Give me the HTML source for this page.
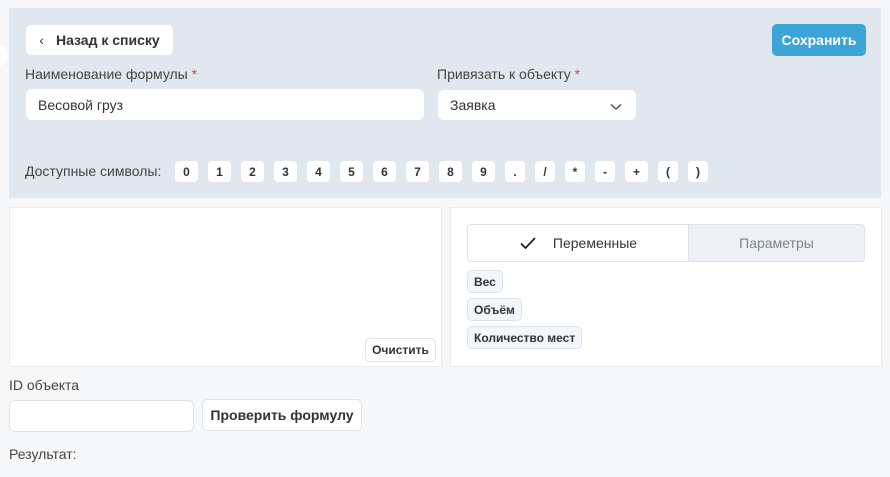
<!DOCTYPE html>
<html><head><meta charset="utf-8"><style>
*{box-sizing:border-box;margin:0;padding:0}
body{width:890px;height:477px;background:#f6f7f9;font-family:"Liberation Sans",sans-serif;color:#333;position:relative;overflow:hidden;font-size:14px}
.abs{position:absolute}
.top{left:9px;top:8px;width:872px;height:190px;background:#e1e7ef}
.btn{background:#fff;border-radius:5px;display:flex;align-items:center;justify-content:center;font-weight:bold;color:#333}
.lbl{font-size:14px;color:#444}
.star{color:#e04848}
.inp{background:#fff;border-radius:6px;display:flex;align-items:center;padding-left:12px;font-size:14px;color:#333}
.sym{display:flex;gap:10px;left:175px;top:161px}
.sym div{background:#fff;border-radius:4px;height:21px;width:23px;font-size:12px;font-weight:bold;display:flex;align-items:center;justify-content:center}
.sym div.n{width:20px}
.box{background:#fff;border:1px solid #e8ecf1}
.tag{background:#f3f6fa;border:1px solid #dde3ea;border-radius:5px;font-size:12px;font-weight:bold;height:23px;display:flex;align-items:center;padding:0 6px;left:467px}
</style></head><body>
<div class="abs" style="left:-12px;top:44px;width:20px;height:22px;background:#fff;border-radius:50%"></div>
<div class="abs top"></div>
<div class="abs btn" style="left:26px;top:25px;width:147px;height:30px;font-size:14px"><span style="margin-right:12px;font-weight:normal">‹</span>Назад к списку</div>
<div class="abs btn" style="left:772px;top:24px;width:94px;height:32px;background:#3ba5d9;color:#fff;font-size:14px">Сохранить</div>
<div class="abs lbl" style="left:25px;top:66px">Наименование формулы <span class="star">*</span></div>
<div class="abs inp" style="left:26px;top:89px;width:398px;height:31px">Весовой груз</div>
<div class="abs lbl" style="left:437px;top:66px">Привязать к объекту <span class="star">*</span></div>
<div class="abs inp" style="left:438px;top:90px;width:198px;height:30px">Заявка
<svg class="abs" style="left:172px;top:13px" width="12" height="8" viewBox="0 0 12 8"><path d="M1 1.5L6 6L11 1.5" fill="none" stroke="#444" stroke-width="1.3"/></svg></div>
<div class="abs lbl" style="left:25px;top:163px">Доступные символы:</div>
<div class="abs sym"><div>0</div><div>1</div><div>2</div><div>3</div><div>4</div><div>5</div><div>6</div><div>7</div><div>8</div><div>9</div><div class="n">.</div><div class="n">/</div><div class="n">*</div><div class="n">-</div><div>+</div><div class="n">(</div><div class="n">)</div></div>
<div class="abs box" style="left:9px;top:207px;width:433px;height:160px"></div>
<div class="abs btn" style="left:365px;top:338px;width:71px;height:24px;border:1px solid #dde3ea;font-size:12px">Очистить</div>
<div class="abs box" style="left:450px;top:207px;width:432px;height:160px"></div>
<div class="abs" style="left:467px;top:224px;width:398px;height:38px;border:1px solid #dde3ea;border-radius:4px;display:flex;overflow:hidden">
<div style="width:220px;background:#fff;display:flex;align-items:center;justify-content:center;font-size:14px;color:#333"><svg width="18" height="14" viewBox="0 0 18 14" style="margin-right:16px"><path d="M2 7.5L6.5 12L16 2" fill="none" stroke="#222" stroke-width="1.8"/></svg>Переменные</div>
<div style="flex:1;background:#edf1f5;border-left:1px solid #dde3ea;display:flex;align-items:center;justify-content:center;color:#7a8594;font-size:14px">Параметры</div></div>
<div class="abs tag" style="top:270px">Вес</div>
<div class="abs tag" style="top:298px">Объём</div>
<div class="abs tag" style="top:326px">Количество мест</div>
<div class="abs lbl" style="left:9px;top:377px">ID объекта</div>
<div class="abs" style="left:9px;top:400px;width:185px;height:32px;background:#fff;border:1px solid #dde3ea;border-radius:6px"></div>
<div class="abs btn" style="left:202px;top:399px;width:160px;height:32px;border:1px solid #dde3ea;font-size:14px">Проверить формулу</div>
<div class="abs lbl" style="left:9px;top:446px">Результат:</div>
</body></html>
